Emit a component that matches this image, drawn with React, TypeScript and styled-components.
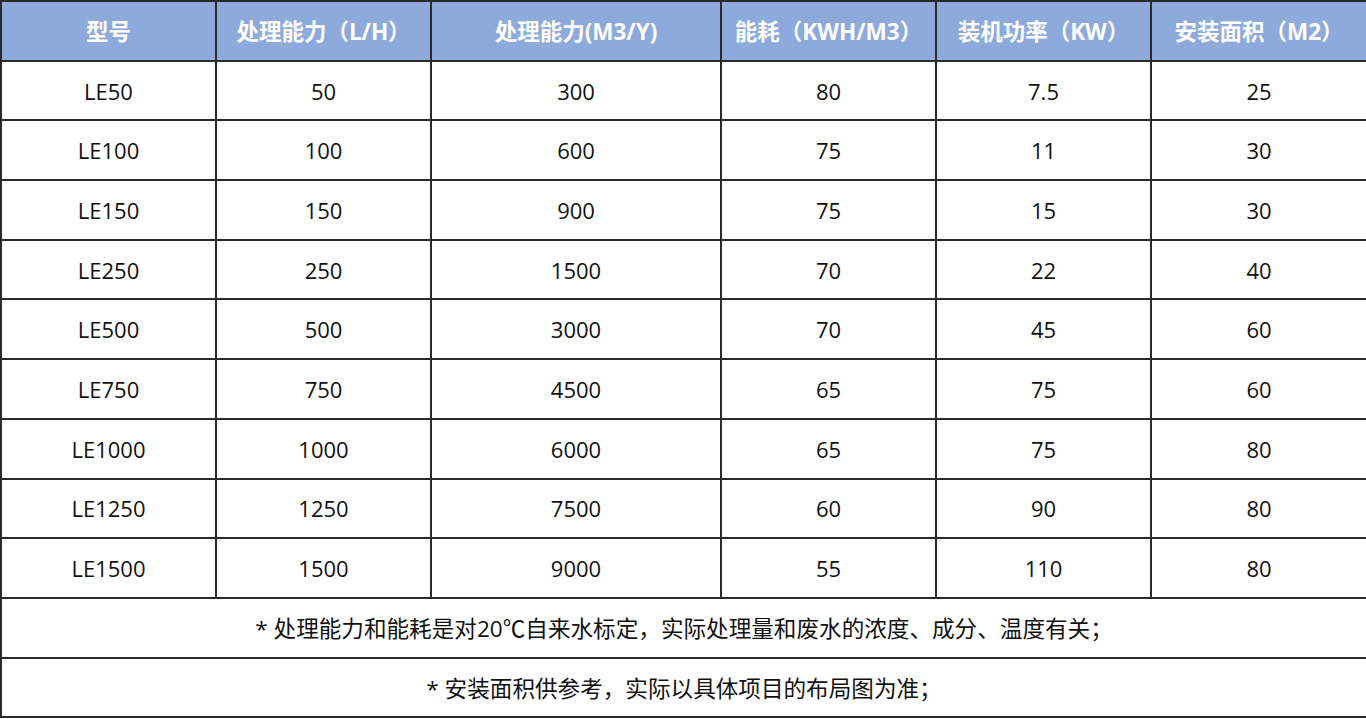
import React from 'react'
import styled, { createGlobalStyle } from 'styled-components'

const GlobalStyle = createGlobalStyle`
	html, body {
		margin: 0;
		padding: 0;
		background: #fff;
	}
	body {
		font-family: 'Open Sans', 'Noto Sans CJK SC', sans-serif;
	}
`

const headers = ['型号', '处理能力（L/H）', '处理能力(M3/Y)', '能耗（KWH/M3）', '装机功率（KW）', '安装面积（M2）']
const widths = [215, 215, 290, 215, 215, 216]

const rows = [
	['LE50', '50', '300', '80', '7.5', '25'],
	['LE100', '100', '600', '75', '11', '30'],
	['LE150', '150', '900', '75', '15', '30'],
	['LE250', '250', '1500', '70', '22', '40'],
	['LE500', '500', '3000', '70', '45', '60'],
	['LE750', '750', '4500', '65', '75', '60'],
	['LE1000', '1000', '6000', '65', '75', '80'],
	['LE1250', '1250', '7500', '60', '90', '80'],
	['LE1500', '1500', '9000', '55', '110', '80'],
]

const notes = [
	'* 处理能力和能耗是对20℃自来水标定，实际处理量和废水的浓度、成分、温度有关；',
	'* 安装面积供参考，实际以具体项目的布局图为准；',
]

export default function App() {
	return (
		<>
			<GlobalStyle />
			<Table>
				<colgroup>
					{widths.map((w, i) => (
						<col key={i} style={{ width: w }} />
					))}
				</colgroup>
				<thead>
					<Row>
						{headers.map((h) => (
							<Th key={h}>{h}</Th>
						))}
					</Row>
				</thead>
				<tbody>
					{rows.map((r) => (
						<Row key={r[0]}>
							{r.map((c, i) => (
								<Td key={i}>{c}</Td>
							))}
						</Row>
					))}
					{notes.map((n) => (
						<Row key={n}>
							<Note colSpan={6}>{n}</Note>
						</Row>
					))}
				</tbody>
			</Table>
		</>
	)
}

const Table = styled.table`
	width: 1366px;
	table-layout: fixed;
	border-collapse: collapse;
	color: #111;
`

const Row = styled.tr`
	height: 59.7px;
`

const Th = styled.th`
	background: #8eaadc;
	color: #fff;
	font-size: 22.5px;
	font-weight: 700;
	text-align: center;
	border: 2px solid #2a2a2a;
	padding: 0;
`

const Td = styled.td`
	font-size: 22px;
	text-align: center;
	border: 2px solid #2a2a2a;
	padding: 0;
`

const Note = styled(Td)`
	font-size: 22.6px;
`
